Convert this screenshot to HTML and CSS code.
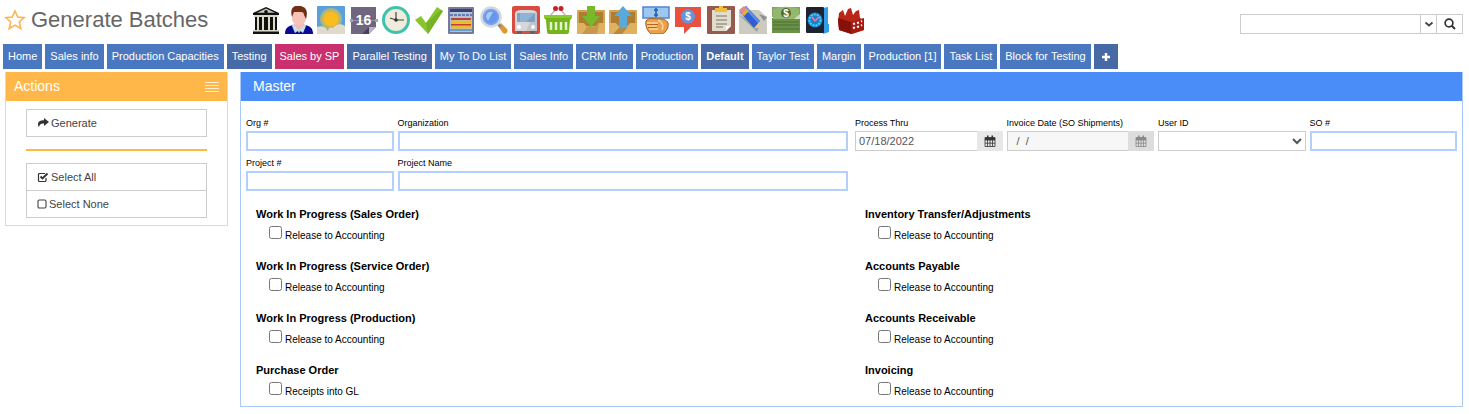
FILE: index.html
```html
<!DOCTYPE html>
<html lang="en">
<head>
    <meta charset="UTF-8">
    <title>Generate Batches</title>
    <link rel="stylesheet" href="styles.css">
</head>
<body>
    <header class="topbar">
        <div class="title">
            <svg class="star" viewBox="0 0 22 22"><path d="M11 2l2.700 6 6.500.6-4.900 4.400 1.500 6.500-5.800-3.400-5.800 3.400 1.500-6.500L1.800 8.600l6.500-.6z" fill="none" stroke="#fdb44b" stroke-width="1.600"/></svg>
            <h1>Generate Batches</h1>
        </div>
        <nav class="shortcuts">
            <a href="#" aria-label="Bank"><svg viewBox="0 0 28 28"><path d="M14 1l13 6v2H1V7z" fill="#111"/><path d="M14 2.500l9 4.300H5z" fill="#c9c8b8"/><circle cx="14" cy="5.800" r="1.800" fill="#111"/><path d="M2 9h24v2H2z" fill="#d8d6c6"/><path d="M3 11h22v13H3z" fill="#111"/><path d="M5 11h2v13H5zM10 11h2v13h-2zM16 11h2v13h-2zM21 11h2v13h-2z" fill="#dedccd"/><path d="M1 24h26v1.500H1z" fill="#d8d6c6"/><path d="M1 25.500h26V28H1z" fill="#111"/></svg></a>
            <a href="#" aria-label="Customer"><svg viewBox="0 0 28 28"><path d="M0 28c0-6 3-8 8-9h12c5 1 8 3 8 9z" fill="#0a0a94"/><path d="M8 19l6 8 6-8-3-3h-6z" fill="#f3b9b4"/><path d="M8 18l6 6-4 3-3-7zM20 18l-6 6 4 3 3-7z" fill="#c2e3e6"/><path d="M7 7c0-9 14-9 14 0v5c0 4-3 8-7 8s-7-4-7-8z" fill="#f6c3bb"/><path d="M7 11C4 0 11-1 15 0c7 1 8 6 6 13l-2-4c0-2-1-3-3-3H9z" fill="#713015"/></svg></a>
            <a href="#" aria-label="Weather"><svg viewBox="0 0 28 28"><rect width="28" height="28" rx="1" fill="#5aa0dc"/><circle cx="14" cy="13" r="11" fill="#9fb789"/><circle cx="14" cy="13" r="9" fill="#d7b64c"/><circle cx="14" cy="13" r="7" fill="#fbbc20"/><path d="M0 21c5-2 9 0 11 4 0-3 2-4 5-3 3-4 8-5 12-2v8H0z" fill="#dfdacb"/></svg></a>
            <a href="#" aria-label="Calendar"><svg viewBox="0 0 28 28"><path d="M1 1h25v20l-7 7H1z" fill="#71667f"/><path d="M12 28l7-7v7z" fill="#4a4157"/><path d="M19 21h7l-7 7z" fill="#b8b0c4"/><path d="M0 13h3v3H0zM25 13h3v3h-3z" fill="#a8a1b2"/><path d="M3 14.500h22" stroke="#9991a5"/><text x="13.500" y="19" class="glyph-day">16</text></svg></a>
            <a href="#" aria-label="Clock"><svg viewBox="0 0 28 28"><circle cx="14" cy="14" r="12.500" fill="#f0ecdc" stroke="#3fc1ac" stroke-width="3"/><path d="M14 14V6M14 14h8M14 14l-6-2" stroke="#444" stroke-width="1.200"/><circle cx="14" cy="14" r="1.800" fill="#333"/></svg></a>
            <a href="#" aria-label="Approve"><svg viewBox="0 0 28 28"><path d="M0 14l6-4 5 7L22 1l6 4-15 23z" fill="#87c52e"/><path d="M11 17l2 11L28 5l-2-1z" fill="#78b326"/></svg></a>
            <a href="#" aria-label="Schedule"><svg viewBox="0 0 28 28"><rect x="1" y="1" width="26" height="27" rx="1" fill="#77799d"/><rect x="3" y="3" width="22" height="23" fill="#b9bfd2"/><path d="M3 3h22v3H3z" fill="#31476f"/><path d="M3 9h22" stroke="#5d7ebb" stroke-width="2" stroke-dasharray="3 1"/><path d="M4 13h20M4 19h20" stroke="#b5453c" stroke-width="2"/><path d="M4 16h20M4 21h20" stroke="#f1b924" stroke-width="3"/><path d="M3 24h22" stroke="#62a1d4" stroke-width="2"/></svg></a>
            <a href="#" aria-label="Find"><svg viewBox="0 0 28 28"><path d="M18 20l3-3 6 6c2 3-2 6-4 4z" fill="#e0982e"/><path d="M16 18l3-1 3 3-2 2z" fill="#868b91"/><circle cx="11" cy="11" r="9.500" fill="#7aa3ec" stroke="#d2d8df" stroke-width="2.500"/><circle cx="11" cy="11" r="6.500" fill="#6597ed"/><path d="M6 11c0-4 3-6 7-5l-5 9z" fill="#a9c8f6"/></svg></a>
            <a href="#" aria-label="Transport"><svg viewBox="0 0 28 28"><rect width="28" height="28" rx="2" fill="#d94b40"/><path d="M3 8c0-4 4-4 11-4s11 0 11 4v17H3z" fill="#d6d6db"/><path d="M23 6c2 1 2 3 2 6v13H14z" fill="#c3c3ca"/><rect x="5" y="7" width="18" height="9" rx="1" fill="#7ba1c7"/><path d="M8 7h15l-9 9h-6z" fill="#8eb3d6"/><circle cx="7" cy="21" r="2" fill="#fff"/><circle cx="21" cy="21" r="2" fill="#fff"/><path d="M5 25h5v3H5zM18 25h5v3h-5z" fill="#69616a"/></svg></a>
            <a href="#" aria-label="Basket"><svg viewBox="0 0 28 28"><path d="M6 10l6-7M22 10l-6-7" stroke="#c5bba8" stroke-width="1.500"/><circle cx="11.500" cy="2.500" r="2.500" fill="#c8202b"/><circle cx="17" cy="2.500" r="2.500" fill="#c8202b"/><path d="M0 9h28v3l-2 2-1 12c0 1-1 2-2 2H5c-1 0-2-1-2-2L2 14l-2-2z" fill="#74b51c"/><path d="M0 9h28v3H0z" fill="#8aca2c"/><path d="M7 16v8M12 16v8M17 16v8M22 16v8" stroke="#e4f2ce" stroke-width="2.500"/></svg></a>
            <a href="#" aria-label="Receive"><svg viewBox="0 0 28 28"><rect y="4" width="28" height="24" rx="1" fill="#d3a34d"/><path d="M2 6h24v11l-7 3H8l-6-3z" fill="#ab7d35"/><path d="M0 17h7l3 4h8l3-4h7v11H0z" fill="#dfb260"/><path d="M10 21h8l5-8-3 15H5z" fill="#b68a3f" opacity=".6"/><path d="M10 0h8v10h5l-9 11-9-11h5z" fill="#78b82b"/></svg></a>
            <a href="#" aria-label="Ship"><svg viewBox="0 0 28 28"><rect y="4" width="28" height="24" rx="1" fill="#d3a34d"/><path d="M2 6h24v11l-7 3H8l-6-3z" fill="#ab7d35"/><path d="M0 17h7l3 4h8l3-4h7v11H0z" fill="#dfb260"/><path d="M10 22h8l-5 6H4z" fill="#977032" opacity=".6"/><path d="M14 0l9 10h-5v12h-8V10H5z" fill="#5ba8db"/></svg></a>
            <a href="#" aria-label="Payment"><svg viewBox="0 0 28 28"><rect x="1" y="1" width="26" height="11" fill="#9dc7ef" stroke="#4f86cf" stroke-width="1.500"/><path d="M14 2v9M12 4h4M12 9h4" stroke="#376cb3" stroke-width="2"/><path d="M4 15c3-4 8-2 12-2 4-1 9 1 10 4 1 3-1 9-6 11H9c-4-3-6-9-5-13z" fill="#eaa04c" stroke="#a95b1e"/><path d="M5 17h11M5 20h10M7 23h9M16 14c4 2 6 5 4 10" fill="none" stroke="#fbd79d" stroke-width="1.500"/><path d="M5 18.500h11M6 21.500h9" stroke="#b9651e"/></svg></a>
            <a href="#" aria-label="Quote"><svg viewBox="0 0 28 28"><path d="M1 1h26v20H17l-7 7v-7H1z" fill="#e8503f"/><circle cx="14" cy="10.500" r="7" fill="#6397da"/><text x="14" y="14" class="glyph-dollar">$</text></svg></a>
            <a href="#" aria-label="Clipboard"><svg viewBox="0 0 28 28"><rect width="28" height="28" rx="1" fill="#955b4d"/><path d="M5 4h19v16l-5 5H5z" fill="#e1dccc"/><path d="M19 20h5l-5 5z" fill="#fff"/><path d="M8 2h12v4H8z" fill="#efbc3d"/><path d="M12 0h4v3h-4z" fill="#efbc3d"/><path d="M9 10h11M9 14h11M9 18h11M9 21h7" stroke="#99968a" stroke-width="1.600"/></svg></a>
            <a href="#" aria-label="Edit note"><svg viewBox="0 0 28 28"><path d="M0 4h20l8 7v17H0z" fill="#cbcbc2"/><path d="M20 8l8 3-3 4z" fill="#8f9089"/><path d="M0 9l18 17 3-7z" fill="#a3a49d"/><path d="M1 6l6-6 14 15v7h-6z" fill="#2e5fd3"/><path d="M5 2l15 16v-3L7 0z" fill="#6292ef"/><path d="M0 4l5-4 4 4-5 5z" fill="#e78b8a"/><path d="M3 8l5-5 2 2-5 5z" fill="#e4b637"/><path d="M15 22l6-7v7z" fill="#edc386"/></svg></a>
            <a href="#" aria-label="Cash"><svg viewBox="0 0 28 28"><path d="M0 1h28v10H0z" fill="#7fa45a"/><path d="M0 12h23l5-3v18H0z" fill="#6a9148"/><path d="M1 3c7-3 19-3 26 0v7l-5 3H1z" fill="#94b770"/><path d="M22 13l6-5v5z" fill="#cfdfb8"/><circle cx="14" cy="7" r="5" fill="#4c6c35"/><path d="M1 16h26M1 19h26M1 23h26" stroke="#4e7135"/><text x="14" y="10.500" class="glyph-dollar">$</text></svg></a>
            <a href="#" aria-label="Safe"><svg viewBox="0 0 28 28"><path d="M19 2l5-1v17h1v8l-6 2z" fill="#329de8"/><rect x="2" y="1" width="18" height="26" rx="1" fill="#20232f"/><circle cx="11" cy="14" r="7.500" fill="#1682d1"/><circle cx="11" cy="14" r="5.500" fill="none" stroke="#48d0ed" stroke-width="2" stroke-dasharray="2 1"/><path d="M11 15l-3-4M11 15l4-4" stroke="#ff7694" stroke-width="1.500"/></svg></a>
            <a href="#" aria-label="Factory"><svg viewBox="0 0 28 28"><path d="M1 16l1-9 4-3 2 6 3-7 3-1 2 7 3-4 3-1 1 8 4 2v10l-12 4L2 24z" fill="#b92618"/><path d="M14 16l13-4v12l-13 4z" fill="#a61a10"/><path d="M1 12l13 4v12L2 24z" fill="#851109"/><path d="M16 18l2-.5M20 17l2-.5M24 15.500l1-.5M16 22l2-.5M20 21l2-.5M24 19.500l1-.5" stroke="#fff" stroke-width="2.200"/></svg></a>
        </nav>
        <form class="search">
            <input type="text" aria-label="Search">
            <button type="button" class="search-more" aria-label="Search options"><svg viewBox="0 0 10 10"><path d="M1.500 3.500L5 6.500l3.500-3" fill="none" stroke="#444" stroke-width="1.800"/></svg></button>
            <button type="button" class="search-go" aria-label="Go"><svg viewBox="0 0 12 12"><circle cx="5" cy="5" r="3.900" fill="none" stroke="#333" stroke-width="1.700"/><path d="M7.500 7.500L11 11" stroke="#333" stroke-width="2"/></svg></button>
        </form>
    </header>

    <nav class="tabs">
        <a href="#">Home</a>
        <a href="#">Sales info</a>
        <a href="#">Production Capacities</a>
        <a href="#" class="dark">Testing</a>
        <a href="#" class="pink">Sales by SP</a>
        <a href="#" class="dark">Parallel Testing</a>
        <a href="#">My To Do List</a>
        <a href="#">Sales Info</a>
        <a href="#">CRM Info</a>
        <a href="#">Production</a>
        <a href="#" class="dark current">Default</a>
        <a href="#">Taylor Test</a>
        <a href="#">Margin</a>
        <a href="#">Production [1]</a>
        <a href="#">Task List</a>
        <a href="#">Block for Testing</a>
        <a href="#" class="dark add" aria-label="Add tab"><svg viewBox="0 0 10 10"><path d="M5 1v8M1 5h8" stroke="#fff" stroke-width="2.400"/></svg></a>
    </nav>

    <div class="layout">
        <aside class="panel actions">
            <div class="panel-header">
                <h2>Actions</h2>
                <svg class="menu-lines" viewBox="0 0 14 12"><path d="M0 1.500h14M0 4.500h14M0 7.500h14M0 10.500h14" stroke="#ffeed2"/></svg>
            </div>
            <div class="actions-body">
                <button type="button"><svg viewBox="0 0 12 12"><path d="M7 1l5 4-5 4V6.500C4 6.500 2.500 7 2 10.500-.5 6 2 3.300 7 3.300z" fill="#333"/></svg>Generate</button>
                <hr>
                <div class="stacked">
                    <button type="button"><svg viewBox="0 0 12 12"><path d="M9 7v2.500c0 .6-.4 1-1 1H2.500c-.6 0-1-.4-1-1v-6c0-.6.4-1 1-1H8" fill="none" stroke="#333" stroke-width="1.200"/><path d="M3.500 5.500L5.500 7.500l5-5" fill="none" stroke="#333" stroke-width="1.900"/></svg>Select All</button>
                    <button type="button"><svg class="empty-box" viewBox="0 0 10 12"><rect x="1" y="2" width="8" height="8" rx="1.200" fill="none" stroke="#444" stroke-width="1.100"/></svg>Select None</button>
                </div>
            </div>
        </aside>

        <main class="panel master">
            <div class="panel-header">
                <h2>Master</h2>
            </div>
            <form class="master-body">
                <div class="halves">
                    <div class="fields">
                        <div class="field"><label for="org">Org #</label><input type="text" id="org"></div>
                        <div class="field wide"><label for="orgName">Organization</label><input type="text" id="orgName"></div>
                        <div class="field"><label for="project">Project #</label><input type="text" id="project"></div>
                        <div class="field wide"><label for="projectName">Project Name</label><input type="text" id="projectName"></div>
                    </div>
                    <div class="fields">
                        <div class="field">
                            <label for="processThru">Process Thru</label>
                            <div class="date">
                                <input type="text" id="processThru" value="07/18/2022">
                                <button type="button" aria-label="Pick process date"><svg viewBox="0 0 12 12"><path d="M1 2.500h10v9H1zM1 5h10M1 8.200h10M3.500 5v6.500M6 5v6.500M8.500 5v6.500" fill="none" stroke="#333" stroke-width=".8"/><path d="M1 2.500h10V5H1zM3 .5h1.500v3H3zM7.500.5H9v3H7.500z" fill="#333"/></svg></button>
                            </div>
                        </div>
                        <div class="field">
                            <label for="invoiceDate">Invoice Date (SO Shipments)</label>
                            <div class="date disabled">
                                <input type="text" id="invoiceDate" value="  /  /" disabled>
                                <button type="button" aria-label="Pick invoice date" disabled><svg viewBox="0 0 12 12"><path d="M1 2.500h10v9H1zM1 5h10M1 8.200h10M3.500 5v6.500M6 5v6.500M8.500 5v6.500" fill="none" stroke="#888" stroke-width=".8"/><path d="M1 2.500h10V5H1zM3 .5h1.500v3H3zM7.500.5H9v3H7.500z" fill="#888"/></svg></button>
                            </div>
                        </div>
                        <div class="field"><label for="userId">User ID</label><select id="userId"><option></option></select></div>
                        <div class="field"><label for="so">SO #</label><input type="text" id="so"></div>
                    </div>
                </div>

                <div class="halves">
                    <div class="groups">
                        <section>
                            <h3>Work In Progress (Sales Order)</h3>
                            <label><input type="checkbox"><span>Release to Accounting</span></label>
                        </section>
                        <section>
                            <h3>Work In Progress (Service Order)</h3>
                            <label><input type="checkbox"><span>Release to Accounting</span></label>
                        </section>
                        <section>
                            <h3>Work In Progress (Production)</h3>
                            <label><input type="checkbox"><span>Release to Accounting</span></label>
                        </section>
                        <section>
                            <h3>Purchase Order</h3>
                            <label><input type="checkbox"><span>Receipts into GL</span></label>
                        </section>
                    </div>
                    <div class="groups">
                        <section>
                            <h3>Inventory Transfer/Adjustments</h3>
                            <label><input type="checkbox"><span>Release to Accounting</span></label>
                        </section>
                        <section>
                            <h3>Accounts Payable</h3>
                            <label><input type="checkbox"><span>Release to Accounting</span></label>
                        </section>
                        <section>
                            <h3>Accounts Receivable</h3>
                            <label><input type="checkbox"><span>Release to Accounting</span></label>
                        </section>
                        <section>
                            <h3>Invoicing</h3>
                            <label><input type="checkbox"><span>Release to Accounting</span></label>
                        </section>
                    </div>
                </div>
            </form>
        </main>
    </div>
</body>
</html>
```

FILE: styles.css
```css
* {
    box-sizing: border-box;
}
body {
    margin: 0;
    font-family: "Liberation Sans", Arial, sans-serif;
    font-size: 11px;
    color: #333;
    background-color: #fff;
}
h1, h2, h3 {
    margin: 0;
    font-weight: normal;
}
svg {
    display: block;
}
input, button, select {
    margin: 0;
    font-family: inherit;
    font-size: 11px;
    color: #555;
    border-radius: 0;
}

/* top bar */
.topbar {
    display: flex;
    align-items: flex-start;
    padding: 6px 6px 10px 4px;
}
.title {
    display: flex;
    align-items: center;
    gap: 5px;
    width: 246px;
    height: 28px;
}
.title h1 {
    font-size: 22px;
    color: #666;
}
.star {
    width: 22px;
    height: 22px;
}
.shortcuts {
    display: grid;
    grid-template-columns: repeat(19, 1fr);
    justify-items: center;
    width: 617px;
}
.shortcuts svg {
    width: 28px;
    height: 28px;
}
.glyph-day {
    font-size: 14px;
    font-weight: bold;
    fill: #fff;
    text-anchor: middle;
}
.glyph-dollar {
    font-size: 10px;
    font-weight: bold;
    fill: #fff;
    text-anchor: middle;
}
.search {
    display: flex;
    width: 223px;
    height: 20px;
    margin-top: 8px;
    margin-left: auto;
    border: 1px solid #ccc;
}
.search input {
    flex: 1;
    min-width: 0;
    border: none;
}
.search button {
    display: flex;
    align-items: center;
    justify-content: center;
    padding: 0;
    background-color: #fff;
    border: none;
    border-left: 1px solid #ccc;
}
.search-more {
    width: 16px;
}
.search-go {
    width: 26px;
}
.search-more svg {
    width: 10px;
    height: 10px;
}
.search-go svg {
    width: 12px;
    height: 12px;
}

/* tabs */
.tabs {
    display: flex;
    gap: 3px;
    padding: 0 3px;
}
.tabs a {
    padding: 0 5px;
    line-height: 25px;
    white-space: nowrap;
    color: #fff;
    text-decoration: none;
    background-color: #4a78c0;
}
.tabs .dark {
    background-color: #476aa7;
}
.tabs .pink {
    background-color: #ca2f6e;
}
.tabs .current {
    font-weight: bold;
}
.tabs .add {
    display: flex;
    align-items: center;
    padding: 0 7px;
}
.add svg {
    width: 10px;
    height: 10px;
}

/* panels */
.layout {
    display: flex;
    align-items: flex-start;
    gap: 12px;
    padding: 3px 6px 6px 5px;
}
.panel-header {
    display: flex;
    align-items: center;
    justify-content: space-between;
    height: 29px;
    color: #fff;
}
.panel-header h2 {
    padding-bottom: 2px;
    font-size: 14px;
}
.actions {
    width: 223px;
    border: 1px solid #fdd596;
    border-top: none;
}
.actions .panel-header {
    padding: 0 8px;
    background-color: #ffb74a;
}
.menu-lines {
    width: 14px;
    height: 12px;
}
.actions-body {
    padding: 8px 20px 7px;
}
.actions-body button {
    display: flex;
    align-items: center;
    gap: 2px;
    width: 100%;
    height: 28px;
    padding: 0 10px;
    color: #444;
    background-color: #fff;
    border: 1px solid #ccc;
}
.actions-body svg {
    width: 12px;
    height: 12px;
}
.actions-body .empty-box {
    width: 10px;
}
.actions-body hr {
    height: 2px;
    margin: 12px 0;
    border: none;
    background-color: #ffb74a;
}
.stacked button + button {
    margin-top: -1px;
}
.master {
    flex: 1;
    border: 1px solid #a9c9fb;
    border-top: none;
}
.master .panel-header {
    padding: 0 12px;
    background-color: #4b8df8;
}
.master-body {
    padding: 16px 5px 8px;
}

/* fields */
.halves {
    display: grid;
    grid-template-columns: 1fr 1fr;
    gap: 7px;
}
.fields {
    display: grid;
    grid-template-columns: repeat(4, 1fr);
    align-content: start;
    gap: 6px 4px;
}
.wide {
    grid-column: span 3;
}
.field label {
    display: block;
    padding-bottom: 2px;
    font-size: 9px;
    line-height: 12px;
    color: #000;
}
.field input, .field select {
    display: block;
    width: 100%;
    height: 20px;
    padding: 0 2px;
    background-color: #fff;
    border: 2px solid #b3cffb;
}
.field select {
    border: 1px solid #ccc;
}
.date {
    display: flex;
}
.field .date input {
    flex: 1;
    min-width: 0;
    padding: 0 3px;
    white-space: pre;
    border: 1px solid #ccc;
    border-right: none;
}
.date button {
    display: flex;
    align-items: center;
    justify-content: center;
    width: 26px;
    padding: 0;
    background-color: #e7e7e7;
    border: none;
}
.date svg {
    width: 12px;
    height: 12px;
}
.field .disabled input {
    background-color: #f7f7f7;
}
.disabled button {
    background-color: #ddd;
}

/* release groups */
.groups {
    display: grid;
    gap: 16px;
    padding: 15px 10px 0;
}
.groups h3 {
    font-size: 11px;
    font-weight: bold;
    line-height: 16px;
    color: #000;
}
.groups label {
    display: flex;
    align-items: flex-start;
    gap: 3px;
    height: 20px;
    padding: 4px 0 0 13px;
    font-size: 10px;
    line-height: 12px;
    color: #000;
}
.groups label span {
    padding-top: 4px;
}
```
